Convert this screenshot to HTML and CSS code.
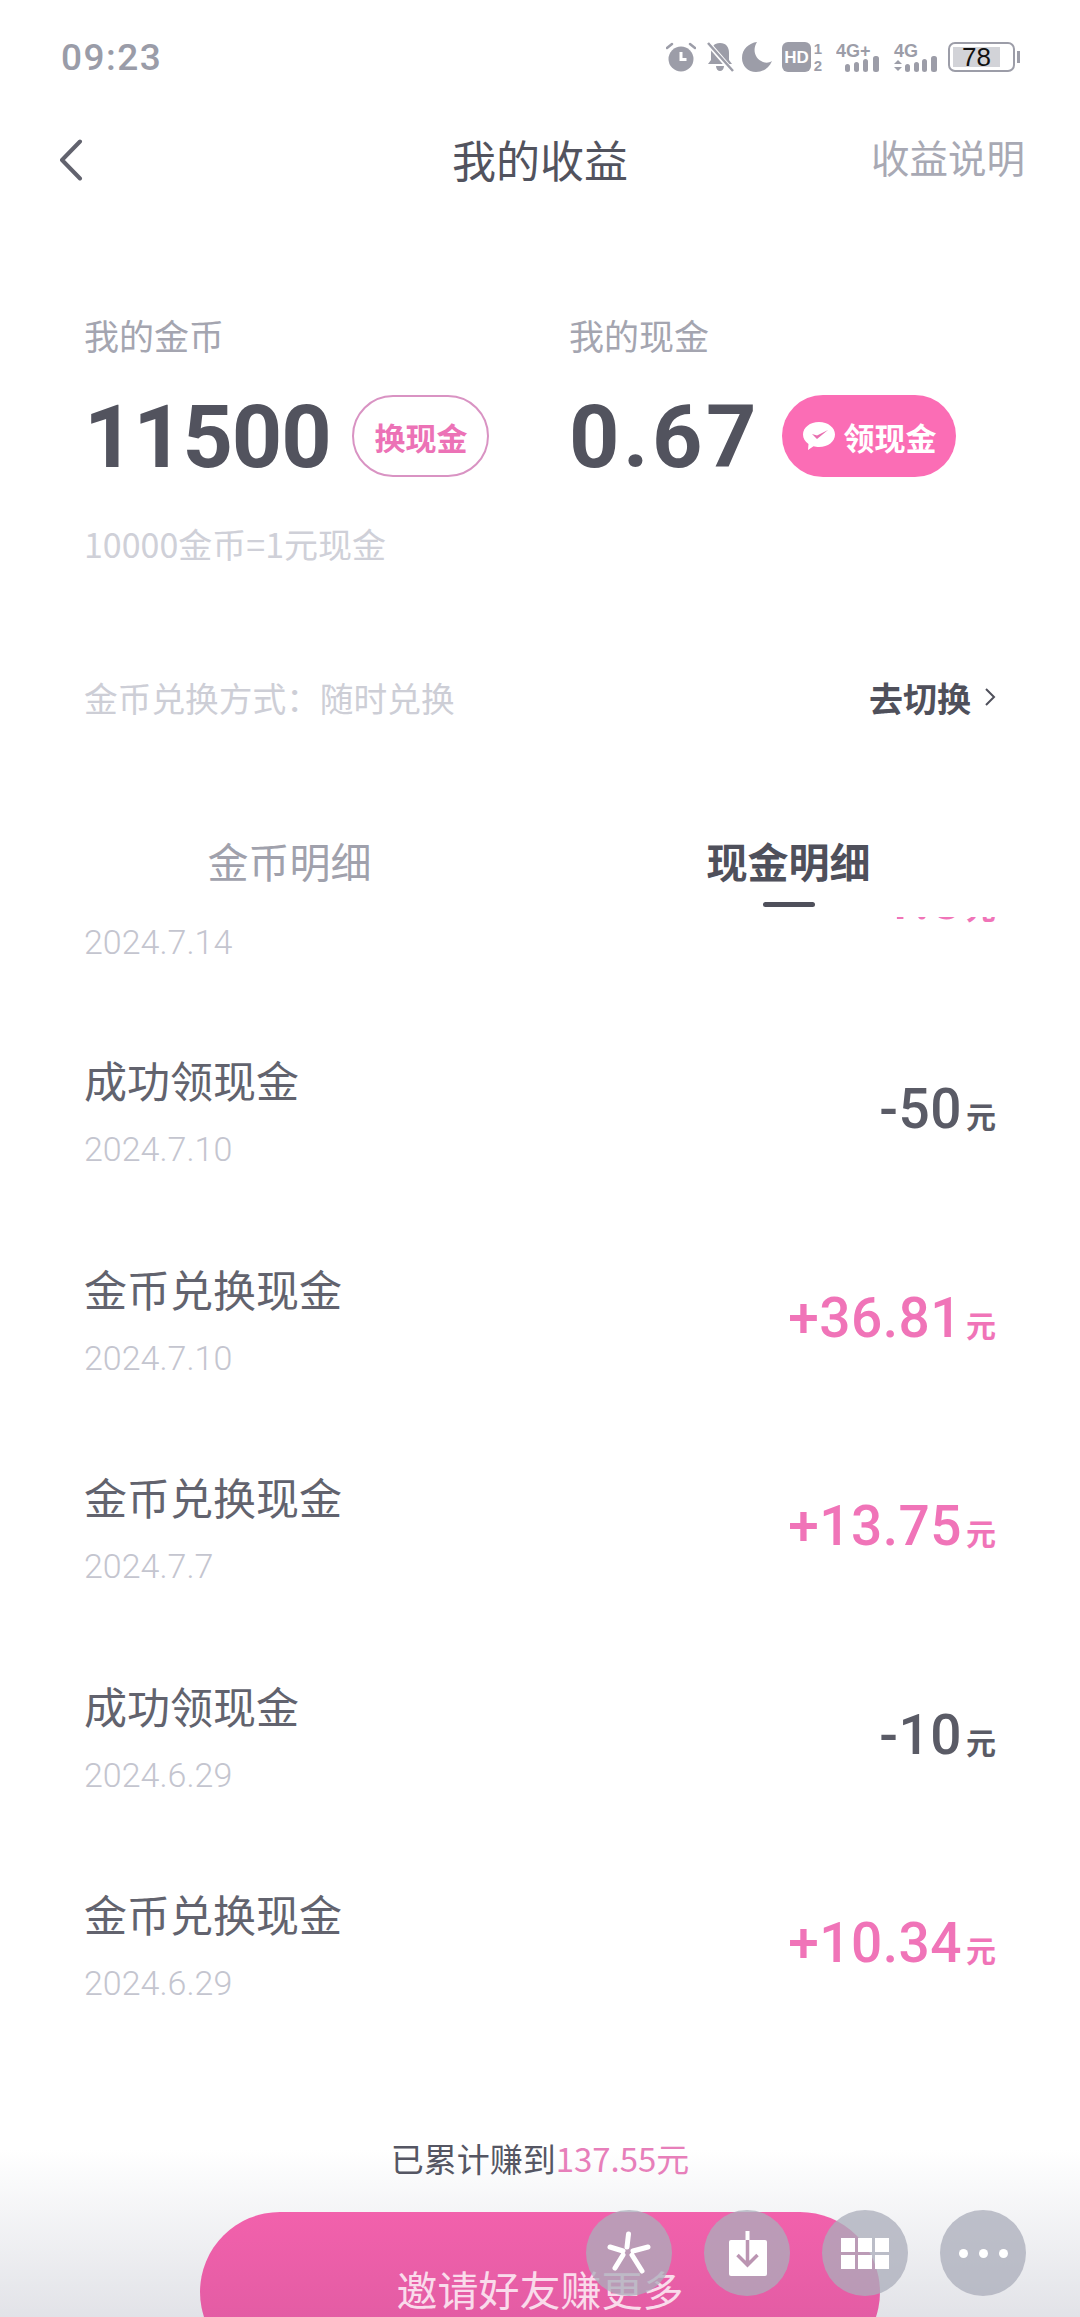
FILE: index.html
```html
<!DOCTYPE html>
<html lang="zh">
<head>
  <meta charset="UTF-8" />
  <title>我的收益</title>
  <link rel="stylesheet" href="styles.css">
</head>
<body>
  <div class="page">
    <div class="status-bar">
      <span class="time">09:23</span>
      <div class="status-icons">
        <svg class="ic" width="30" height="30" viewBox="0 0 30 30">
          <circle cx="15" cy="17" r="12.5" fill="#9c9da8"/>
          <path d="M15 10v7.5h5.5" fill="none" stroke="#fff" stroke-width="3"/>
          <path d="M1 6l5-4M29 6l-5-4" stroke="#9c9da8" stroke-width="2.5" stroke-linecap="round"/>
        </svg>
        <svg class="ic ic-bell" width="28" height="30" viewBox="0 0 28 30">
          <path d="M14 1c6 0 9 4 9 10v7l3 4H2l3-4v-7C5 5 8 1 14 1zM10 24h8c0 3-2 5-4 5s-4-2-4-5z" fill="#9c9da8"/>
          <path d="M1 0l26 30" stroke="#fff" stroke-width="5"/>
          <path d="M2 1l25 28" stroke="#9c9da8" stroke-width="2.5"/>
        </svg>
        <svg class="ic" width="30" height="30" viewBox="0 0 30 30">
          <path d="M15 0C7 1 0 7 0 16c0 8 6 14 14 14 7 0 13-4 16-11-3 2-6 2-9 1C13 17 10 8 15 0z" fill="#9c9da8"/>
        </svg>
        <svg class="ic ic-hd" width="42" height="36" viewBox="0 -3 42 36">
          <rect x="0" y="0" width="29" height="30" rx="6" fill="#9c9da8"/>
          <text x="14.5" y="21" class="hd">HD</text>
          <text x="36" y="12" class="sim">1</text>
          <text x="36" y="29" class="sim">2</text>
        </svg>
        <svg class="ic ic-net1" width="44" height="36" viewBox="0 -3 44 36">
          <text x="0" y="15" class="net-text">4G+</text>
          <rect x="9" y="22" width="5" height="8" rx="2.5" fill="#9c9da8"/>
          <rect x="18" y="20" width="5" height="10" rx="2.5" fill="#9c9da8"/>
          <rect x="27" y="17" width="5" height="13" rx="2.5" fill="#9c9da8"/>
          <rect x="37" y="14" width="6" height="16" rx="2.5" fill="#9c9da8"/>
        </svg>
        <svg class="ic ic-net2" width="44" height="36" viewBox="0 -3 44 36">
          <text x="1" y="15" class="net-text">4G</text>
          <path d="M1 22l4-4 4 4zM1 25l4 4 4-4z" fill="#9c9da8"/>
          <rect x="12" y="22" width="5" height="8" rx="2.5" fill="#9c9da8"/>
          <rect x="21" y="20" width="5" height="10" rx="2.5" fill="#9c9da8"/>
          <rect x="29" y="17" width="5" height="13" rx="2.5" fill="#9c9da8"/>
          <rect x="38" y="14" width="6" height="16" rx="2.5" fill="#9c9da8"/>
        </svg>
        <div class="battery"><div class="battery-level">78</div></div>
      </div>
    </div>

    <div class="nav">
      <svg class="back" width="26" height="42" viewBox="0 0 26 42">
        <path d="M22 2.5L4 21l18 18.500" fill="none" stroke="#62636e" stroke-width="4" stroke-linecap="round" stroke-linejoin="round"/>
      </svg>
      <div class="nav-title">我的收益</div>
      <div class="nav-link">收益说明</div>
    </div>

    <div class="summary">
      <div class="summary-col coin-col">
        <div class="summary-label">我的金币</div>
        <div class="summary-row">
          <span class="big-num coin-num">11500</span>
          <span class="pill pill-line">换现金</span>
        </div>
        <div class="rate">10000金币=1元现金</div>
      </div>
      <div class="summary-col">
        <div class="summary-label">我的现金</div>
        <div class="summary-row">
          <span class="big-num cash-num">0.67</span>
          <span class="pill pill-fill">
            <svg width="34" height="30" viewBox="0 0 34 30">
              <path d="M17 1c9 0 16 5.500 16 12.500S26 26 17 26c-2 0-4-.3-5.500-.8L6 29l.5-6C3 20.500 1 17.500 1 13.500 1 6.500 8 1 17 1z" fill="#fff"/>
              <path d="M10 13l5 5 11-9-11 5.500z" fill="#e86fb0"/>
            </svg>
            领现金
          </span>
        </div>
      </div>
    </div>

    <div class="exchange">
      <span class="exchange-text">金币兑换方式：随时兑换</span>
      <span class="exchange-link">去切换
        <svg width="12" height="20" viewBox="0 0 12 20"><path d="M2 2l8 8-8 8" fill="none" stroke="#4f505b" stroke-width="2"/></svg>
      </span>
    </div>

    <div class="tabs">
      <div class="tab">金币明细</div>
      <div class="tab tab-active">现金明细<i class="tab-bar"></i></div>
    </div>

    <div class="list">
      <div class="row row-first">
        <div class="row-date">2024.7.14</div>
        <div class="amount plus">+1.5<small>元</small></div>
      </div>
      <div class="row">
        <div><div class="row-title">成功领现金</div><div class="row-date">2024.7.10</div></div>
        <div class="amount">-50<small>元</small></div>
      </div>
      <div class="row">
        <div><div class="row-title">金币兑换现金</div><div class="row-date">2024.7.10</div></div>
        <div class="amount plus">+36.81<small>元</small></div>
      </div>
      <div class="row">
        <div><div class="row-title">金币兑换现金</div><div class="row-date">2024.7.7</div></div>
        <div class="amount plus">+13.75<small>元</small></div>
      </div>
      <div class="row">
        <div><div class="row-title">成功领现金</div><div class="row-date">2024.6.29</div></div>
        <div class="amount">-10<small>元</small></div>
      </div>
      <div class="row">
        <div><div class="row-title">金币兑换现金</div><div class="row-date">2024.6.29</div></div>
        <div class="amount plus">+10.34<small>元</small></div>
      </div>
    </div>

    <div class="footer">
      <div class="total">已累计赚到<span class="total-num">137.55元</span></div>
      <div class="invite">邀请好友赚更多</div>
    </div>

    <div class="float-btns">
      <div class="float-btn">
        <svg width="86" height="86" viewBox="0 0 86 86">
          <path d="M42.500 24L41 37M24 37l13 4M62 37l-15 4M29 58l8-13M56 61L46 45" fill="none" stroke="#fff" stroke-width="5" stroke-linecap="round"/>
        </svg>
      </div>
      <div class="float-btn">
        <svg width="86" height="86" viewBox="0 0 86 86">
          <rect x="25" y="30" width="38" height="36" rx="2" fill="#fff"/>
          <path d="M43.500 21v9" stroke="#fff" stroke-width="4"/>
          <path d="M43.500 30v24M33.500 45l10 10 10-10" fill="none" stroke="#bb95b2" stroke-width="3.500"/>
        </svg>
      </div>
      <div class="float-btn">
        <div class="grid-icon"><i></i><i></i><i></i><i></i><i></i><i></i></div>
      </div>
      <div class="float-btn">
        <div class="dots-icon"><i></i><i></i><i></i></div>
      </div>
    </div>
  </div>
</body>
</html>
```

FILE: styles.css
```css
* {
  margin: 0;
  padding: 0;
  box-sizing: border-box;
}
body {
  font-family: 'Noto Sans CJK SC', 'Noto Sans', sans-serif;
  background: #fff;
}
.page {
  position: relative;
  width: 1080px;
  height: 2317px;
  overflow: hidden;
  display: flex;
  flex-direction: column;
}
.status-bar {
  height: 114px;
  padding: 0 65px 0 61px;
  display: flex;
  align-items: center;
  justify-content: space-between;
}
.time {
  font-family: 'Roboto', sans-serif;
  font-size: 37px;
  font-weight: 500;
  letter-spacing: 1.5px;
  color: #9a9ca8;
}
.status-icons {
  display: flex;
  align-items: center;
}
.ic {
  margin-right: 10px;
  display: block;
}
.ic-bell {
  margin-right: 8px;
}
.ic-hd {
  margin-right: 12px;
}
.ic-net1 {
  margin-right: 13px;
}
.ic-net2 {
  margin-right: 11px;
}
.hd {
  font-family: 'Liberation Sans', sans-serif;
  font-size: 17px;
  font-weight: bold;
  fill: #fff;
  text-anchor: middle;
}
.sim {
  font-family: 'Liberation Sans', sans-serif;
  font-size: 15px;
  font-weight: bold;
  fill: #9c9da8;
  text-anchor: middle;
}
.net-text {
  font-family: 'Liberation Sans', sans-serif;
  font-size: 18px;
  font-weight: bold;
  fill: #9c9da8;
}
.battery {
  position: relative;
  width: 67px;
  height: 30px;
  padding: 3px;
  border: 2px solid #9c9da8;
  border-radius: 7px;
}
.battery::after {
  content: '';
  position: absolute;
  right: -7px;
  top: 7px;
  width: 3px;
  height: 12px;
  background: #9c9da8;
}
.battery-level {
  width: 47px;
  height: 20px;
  background: #d2d3d8;
  font-family: 'Liberation Sans', sans-serif;
  font-size: 26px;
  line-height: 20px;
  text-align: center;
  color: #111;
}
.nav {
  height: 92px;
  padding: 0 55px 0 58px;
  display: flex;
  align-items: center;
  justify-content: space-between;
  position: relative;
}
.nav-title {
  position: absolute;
  left: 0;
  right: 0;
  padding-bottom: 3px;
  text-align: center;
  font-size: 44px;
  color: #52535e;
}
.nav-link {
  margin-bottom: 8px;
  font-size: 38.5px;
  color: #a8a9b4;
}
.summary {
  margin-top: 104px;
  padding-left: 84px;
  display: flex;
}
.coin-col {
  width: 485px;
}
.summary-label {
  font-size: 35px;
  line-height: 50px;
  color: #a4a5b0;
}
.summary-row {
  margin-top: 35px;
  height: 82px;
  display: flex;
  align-items: center;
}
.big-num {
  font-family: 'Roboto', sans-serif;
  font-size: 88px;
  font-weight: 700;
  color: #52535e;
  margin-right: 22px;
}
.coin-num {
  letter-spacing: -1.2px;
}
.cash-num {
  letter-spacing: 3.5px;
}
.pill {
  height: 82px;
  border-radius: 41px;
  display: flex;
  align-items: center;
  justify-content: center;
  font-size: 31px;
  font-weight: 700;
}
.pill-line {
  width: 137px;
  border: 2px solid #d993c3;
  color: #ec72b6;
}
.pill-fill {
  width: 174px;
  background: #fb6db5;
  color: #fff;
  gap: 8px;
}
.rate {
  margin-top: 42px;
  font-size: 34px;
  line-height: 50px;
  color: #cfd0d8;
}
.exchange {
  margin-top: 103px;
  height: 50px;
  padding: 0 84px;
  display: flex;
  align-items: center;
  justify-content: space-between;
  font-size: 34px;
}
.exchange-text {
  font-size: 33.7px;
  color: #cdced6;
}
.exchange-link {
  display: flex;
  align-items: center;
  gap: 13px;
  color: #4f505b;
  font-weight: 700;
}
.tabs {
  margin-top: 108px;
  height: 87px;
  padding: 0 42px 0 40px;
  display: grid;
  grid-template-columns: 1fr 1fr;
}
.tab {
  font-size: 41px;
  line-height: 60px;
  text-align: center;
  color: #a0a1ac;
}
.tab-active {
  color: #4f505b;
  font-weight: 700;
}
.tab-bar {
  display: block;
  width: 52px;
  height: 5px;
  margin: 12px auto 0;
  border-radius: 3px;
  background: #4f505b;
}
.list {
  flex: 1;
  overflow: hidden;
  padding: 0 84px;
}
.row {
  height: 208.5px;
  padding-top: 42px;
  display: flex;
  justify-content: space-between;
}
.row-first {
  height: 90px;
  padding-top: 2px;
}
.row-first .row-date {
  margin-top: 0;
}
.row-first .amount {
  margin-top: -79px;
}
.row-title {
  font-size: 43px;
  line-height: 60px;
  color: #62636e;
}
.row-date {
  margin-top: 17px;
  font-family: 'Roboto', sans-serif;
  font-size: 34px;
  font-weight: 300;
  line-height: 46px;
  color: #c4c5cf;
}
.amount {
  font-family: 'Roboto', sans-serif;
  font-size: 55px;
  font-weight: 500;
  line-height: 120px;
  letter-spacing: 0.5px;
  color: #5a5b66;
}
.amount.plus {
  color: #f074b8;
}
.amount small {
  margin-left: 4px;
  font-family: 'Noto Sans CJK SC', sans-serif;
  font-size: 30px;
  font-weight: 700;
  letter-spacing: 0;
}
.footer {
  height: 197px;
  padding-top: 13px;
  background: linear-gradient(#fff, #fff 15%, #e2e3e8);
  display: flex;
  flex-direction: column;
  align-items: center;
}
.total {
  font-size: 33px;
  line-height: 50px;
  color: #555663;
}
.total-num {
  color: #e77fba;
}
.invite {
  flex: none;
  width: 680px;
  height: 160px;
  margin-top: 29px;
  padding-top: 46px;
  border-radius: 80px;
  background: linear-gradient(#f261ac, #dc5aa0);
  font-size: 41px;
  line-height: 60px;
  text-align: center;
  color: rgba(255, 255, 255, 0.78);
}
.float-btns {
  position: absolute;
  top: 2210px;
  right: 54px;
  display: flex;
  gap: 32px;
}
.float-btn {
  width: 86px;
  height: 86px;
  border-radius: 50%;
  background: rgba(171, 174, 186, 0.76);
  display: flex;
  align-items: center;
  justify-content: center;
}
.grid-icon {
  display: grid;
  grid-template-columns: repeat(3, 14px);
  grid-auto-rows: 14px;
  gap: 3px;
}
.grid-icon i {
  background: #fff;
}
.dots-icon {
  display: flex;
  gap: 11px;
}
.dots-icon i {
  width: 9px;
  height: 9px;
  border-radius: 50%;
  background: #fff;
}
```
